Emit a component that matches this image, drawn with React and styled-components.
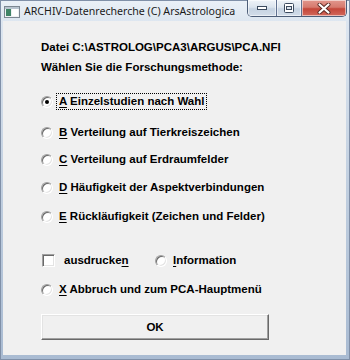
import React from "react";
import styled, { createGlobalStyle } from "styled-components";

function App() {
  return (
    <Window>
      <GlobalStyle />
      <TitleBar>
        <AppIcon width="16" height="12" viewBox="0 0 16 12">
          <rect x="0.5" y="0.5" width="15" height="11" fill="#eef1f3" stroke="#7c8792" />
          <rect x="1" y="1" width="14" height="2" fill="#b8c4cf" />
          <rect x="2" y="3" width="5" height="7" fill="#3f8466" />
          <rect x="8" y="3" width="6" height="7" fill="#ffffff" />
        </AppIcon>
        <Caption>ARCHIV-Datenrecherche (C) ArsAstrologica</Caption>
        <CaptionButtons>
          <CapButton $w={28}>
            <svg width="12" height="6" viewBox="0 0 12 6">
              <rect x="1.5" y="1.5" width="9" height="3" fill="#fff" stroke="#3b4a5e" />
            </svg>
          </CapButton>
          <CapButton $w={25}>
            <svg width="12" height="10" viewBox="0 0 12 10">
              <rect x="1.5" y="0.5" width="9" height="9" rx="1" fill="#fff" stroke="#3b4a5e" />
              <rect x="3.5" y="3.5" width="5" height="3" fill="#dbe3ec" stroke="#3b4a5e" />
            </svg>
          </CapButton>
          <CapButton $w={45} $close>
            <svg width="14" height="11" viewBox="0 0 14 11">
              <path d="M2.5 1.5 L11.5 9.5 M11.5 1.5 L2.5 9.5" stroke="#5a2a24" strokeWidth="4" strokeLinecap="round" />
              <path d="M2.5 1.5 L11.5 9.5 M11.5 1.5 L2.5 9.5" stroke="#fff" strokeWidth="2.2" strokeLinecap="round" />
            </svg>
          </CapButton>
        </CaptionButtons>
      </TitleBar>
      <Client>
        <Line $top={0}>Datei C:\ASTROLOG\PCA3\ARGUS\PCA.NFI</Line>
        <Line $top={6}>Wählen Sie die Forschungsmethode:</Line>
        <Option $top={19}>
          <Radio $checked />
          <Label $focused>
            <u>A</u> Einzelstudien nach Wahl
          </Label>
        </Option>
        <Option $top={14}>
          <Radio />
          <Label>
            <u>B</u> Verteilung auf Tierkreiszeichen
          </Label>
        </Option>
        <Option $top={10}>
          <Radio />
          <Label>
            <u>C</u> Verteilung auf Erdraumfelder
          </Label>
        </Option>
        <Option $top={11}>
          <Radio />
          <Label>
            <u>D</u> Häufigkeit der Aspektverbindungen
          </Label>
        </Option>
        <Option $top={12}>
          <Radio />
          <Label>
            <u>E</u> Rückläufigkeit (Zeichen und Felder)
          </Label>
        </Option>
        <SplitRow $top={27}>
          <Option $top={0}>
            <Checkbox />
            <Label $gap={7}>
              ausdrucke<u>n</u>
            </Label>
          </Option>
          <Option $top={0}>
            <Radio />
            <Label>
              <u>I</u>nformation
            </Label>
          </Option>
        </SplitRow>
        <Option $top={12}>
          <Radio />
          <Label>
            <u>X</u> Abbruch und zum PCA-Hauptmenü
          </Label>
        </Option>
        <OkButton>OK</OkButton>
      </Client>
    </Window>
  );
}

const GlobalStyle = createGlobalStyle`
  html, body {
    margin: 0;
    padding: 0;
    background: #ffffff;
  }
  body {
    font-family: "Liberation Sans", Arial, sans-serif;
  }
`;

const Window = styled.div`
  width: 350px;
  height: 360px;
  box-sizing: border-box;
  display: flex;
  flex-direction: column;
  padding: 0 3px 4px 2px;
  border: 1px solid #8090a8;
  background: linear-gradient(#eaf0f7 0px, #dde6f0 20px, #bccbdd 60%, #a9bbd2 100%);
`;

const TitleBar = styled.div`
  height: 20px;
  display: flex;
  align-items: flex-start;
  flex-shrink: 0;
`;

const AppIcon = styled.svg`
  margin: 5px 0 0 1px;
  flex-shrink: 0;
`;

const Caption = styled.div`
  margin: 2px 0 0 4px;
  font-family: "Noto Sans", "Open Sans", sans-serif;
  font-size: 10.6px;
  line-height: 16px;
  color: #1b1b1b;
  white-space: nowrap;
`;

const CaptionButtons = styled.div`
  margin: -1px -1px 0 auto;
  display: flex;
  flex-shrink: 0;
  height: 17px;
  border: 1px solid #4d5e78;
  border-top: none;
  border-radius: 0 0 5px 5px;
  overflow: hidden;
  box-sizing: border-box;
`;

const CapButton = styled.div`
  width: ${(p) => p.$w}px;
  height: 100%;
  box-sizing: border-box;
  display: flex;
  align-items: center;
  justify-content: center;
  border-left: 1px solid #5f7190;
  box-shadow: inset 0 0 0 1px rgba(255, 255, 255, 0.55);
  background: ${(p) =>
    p.$close
      ? "linear-gradient(#e2978d 0%, #d67a6e 45%, #c4473a 55%, #d2685b 100%)"
      : "linear-gradient(#eef3f8 0%, #dbe4ee 45%, #c6d3e2 55%, #d2dde9 100%)"};
  &:first-child {
    border-left: none;
  }
`;

const Client = styled.div`
  flex: 1;
  background: #f0f0f0;
  padding: 19px 0 0 38px;
  display: flex;
  flex-direction: column;
  align-items: flex-start;
  color: #000;
  font-size: 11.5px;
  font-weight: bold;
`;

const Line = styled.div`
  height: 14px;
  line-height: 14px;
  margin-top: ${(p) => p.$top}px;
  white-space: nowrap;
`;

const Option = styled.div`
  display: flex;
  align-items: center;
  height: 17px;
  margin-top: ${(p) => p.$top}px;
`;

const SplitRow = styled.div`
  display: grid;
  grid-template-columns: 114px auto;
  margin-top: ${(p) => p.$top}px;
`;

const Radio = styled.span`
  position: relative;
  width: 12px;
  height: 12px;
  box-sizing: border-box;
  border-radius: 50%;
  border: 1px solid;
  border-color: #a0a0a0 #ffffff #ffffff #a0a0a0;
  background: #fff;
  box-shadow: inset 1px 1px 0 #696969, inset -1px -1px 0 #e3e3e3;
  flex-shrink: 0;
  &::after {
    content: "";
    display: ${(p) => (p.$checked ? "block" : "none")};
    position: absolute;
    left: 3px;
    top: 3px;
    width: 4px;
    height: 4px;
    border-radius: 50%;
    background: #000;
  }
`;

const Checkbox = styled.span`
  width: 13px;
  height: 13px;
  margin-left: 1px;
  box-sizing: border-box;
  border: 1px solid;
  border-color: #a0a0a0 #ffffff #ffffff #a0a0a0;
  background: #fff;
  box-shadow: inset 1px 1px 0 #696969, inset -1px -1px 0 #e3e3e3;
  flex-shrink: 0;
`;

const Label = styled.span`
  margin-left: ${(p) => (p.$gap ? p.$gap : 4)}px;
  padding: 0 2px;
  height: 15px;
  line-height: 15px;
  white-space: nowrap;
  outline: ${(p) => (p.$focused ? "1px dotted #000" : "none")};
  u {
    text-underline-offset: 2px;
  }
`;

const OkButton = styled.div`
  margin-top: 16px;
  width: 228px;
  height: 26px;
  box-sizing: border-box;
  display: flex;
  align-items: center;
  justify-content: center;
  background: #f0f0f0;
  border: 1px solid;
  border-color: #ffffff #696969 #696969 #ffffff;
  box-shadow: inset -1px -1px 0 #a0a0a0, inset 1px 1px 0 #e3e3e3;
  font-size: 11.5px;
`;

export default App;
